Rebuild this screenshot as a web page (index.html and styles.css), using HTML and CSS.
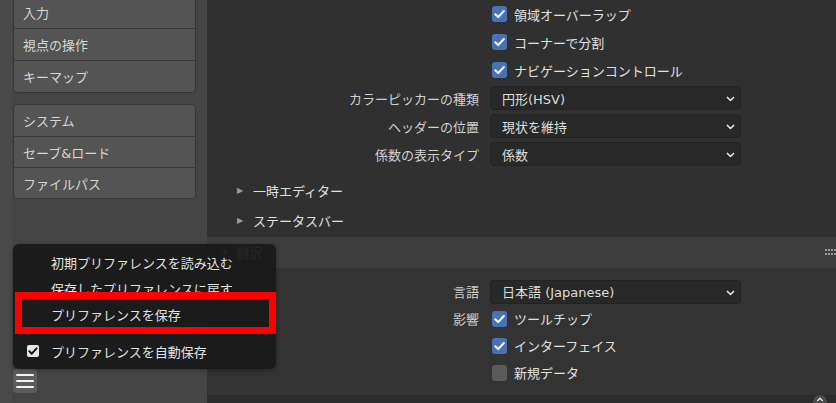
FILE: index.html
```html
<!DOCTYPE html>
<html lang="ja">
<head>
<meta charset="utf-8">
<title>Preferences</title>
<link rel="stylesheet" href="styles.css">
</head>
<body>
<div class="app">
  <aside class="sidebar">
    <div class="group g1">
      <div class="nav">入力</div>
      <div class="nav">視点の操作</div>
      <div class="nav">キーマップ</div>
    </div>
    <div class="group g2">
      <div class="nav">システム</div>
      <div class="nav">セーブ&amp;ロード</div>
      <div class="nav">ファイルパス</div>
    </div>
    <div class="hamburger">
      <span></span><span></span><span></span>
    </div>
  </aside>

  <main class="main">
    <section class="panel top">
      <div class="row">
        <div class="label"></div>
        <div class="ctrl"><span class="cb on"><svg viewBox="0 0 16 16"><path d="M3.5 8.3 L6.6 11.3 L12.6 4.8" /></svg></span>領域オーバーラップ</div>
      </div>
      <div class="row">
        <div class="label"></div>
        <div class="ctrl"><span class="cb on"><svg viewBox="0 0 16 16"><path d="M3.5 8.3 L6.6 11.3 L12.6 4.8" /></svg></span>コーナーで分割</div>
      </div>
      <div class="row">
        <div class="label"></div>
        <div class="ctrl"><span class="cb on"><svg viewBox="0 0 16 16"><path d="M3.5 8.3 L6.6 11.3 L12.6 4.8" /></svg></span>ナビゲーションコントロール</div>
      </div>
      <div class="row">
        <div class="label">カラーピッカーの種類</div>
        <div class="select">円形(HSV)<svg class="chev" viewBox="0 0 10 6"><path d="M1.5 1.2 L5 4.6 L8.5 1.2"/></svg></div>
      </div>
      <div class="row">
        <div class="label">ヘッダーの位置</div>
        <div class="select">現状を維持<svg class="chev" viewBox="0 0 10 6"><path d="M1.5 1.2 L5 4.6 L8.5 1.2"/></svg></div>
      </div>
      <div class="row">
        <div class="label">係数の表示タイプ</div>
        <div class="select">係数<svg class="chev" viewBox="0 0 10 6"><path d="M1.5 1.2 L5 4.6 L8.5 1.2"/></svg></div>
      </div>
      <div class="sub first"><span class="tri">▶</span>一時エディター</div>
      <div class="sub"><span class="tri">▶</span>ステータスバー</div>
    </section>

    <div class="phead">
      <span class="tri down">▼</span><span class="ptitle">翻訳</span>
      <svg class="handle" viewBox="0 0 11 7">
        <rect x="0" y="0" width="2" height="2"/><rect x="3" y="0" width="2" height="2"/><rect x="6" y="0" width="2" height="2"/><rect x="9" y="0" width="2" height="2"/>
        <rect x="0" y="4" width="2" height="2"/><rect x="3" y="4" width="2" height="2"/><rect x="6" y="4" width="2" height="2"/><rect x="9" y="4" width="2" height="2"/>
      </svg>
    </div>

    <section class="panel bottom">
      <div class="row">
        <div class="label">言語</div>
        <div class="select">日本語 (Japanese)<svg class="chev" viewBox="0 0 10 6"><path d="M1.5 1.2 L5 4.6 L8.5 1.2"/></svg></div>
      </div>
      <div class="row">
        <div class="label">影響</div>
        <div class="ctrl"><span class="cb on"><svg viewBox="0 0 16 16"><path d="M3.5 8.3 L6.6 11.3 L12.6 4.8" /></svg></span>ツールチップ</div>
      </div>
      <div class="row">
        <div class="label"></div>
        <div class="ctrl"><span class="cb on"><svg viewBox="0 0 16 16"><path d="M3.5 8.3 L6.6 11.3 L12.6 4.8" /></svg></span>インターフェイス</div>
      </div>
      <div class="row">
        <div class="label"></div>
        <div class="ctrl"><span class="cb"></span>新規データ</div>
      </div>
    </section>

    <div class="footer">
      <span class="totop"><svg viewBox="0 0 10 6"><path d="M1.5 4.8 L5 1.4 L8.5 4.8"/></svg></span>
    </div>
  </main>

  <div class="popup">
    <div class="mi">初期プリファレンスを読み込む</div>
    <div class="mi">保存したプリファレンスに戻す</div>
    <div class="mi">プリファレンスを保存</div>
    <div class="mi check"><span class="wcb"><svg viewBox="0 0 12 12"><path d="M2.3 6.2 L4.8 8.7 L9.6 3.4"/></svg></span>プリファレンスを自動保存</div>
    <div class="highlight"></div>
  </div>
</div>
</body>
</html>
```

FILE: styles.css
```css
* { box-sizing: border-box; }

html, body {
  margin: 0;
  padding: 0;
  width: 836px;
  height: 403px;
  overflow: hidden;
  background: #303030;
  font-family: "DejaVu Sans", "Noto Sans CJK JP", sans-serif;
  font-size: 13px;
  color: #d8d8d8;
}

.app {
  position: relative;
  display: flex;
  width: 836px;
  height: 403px;
}

/* ---------- sidebar ---------- */
.sidebar {
  width: 207px;
  flex: none;
  display: flex;
  flex-direction: column;
  background: #454545;
  padding: 0 11px 10px 1px;
  border-left: 12px solid #4a4a4a;
}

.group {
  background: #545454;
  border: 1px solid #383838;
  border-radius: 4px;
  overflow: hidden;
}

.g1 {
  margin-top: -4px;
  border-top: none;
}

.g2 {
  margin-top: 11px;
}

.nav {
  height: 32px;
  display: flex;
  align-items: center;
  padding-left: 9px;
  color: #d6d6d6;
}

.g2 .nav { height: 31px; }

.nav + .nav {
  border-top: 1px solid #3a3a3a;
}

.hamburger {
  margin-top: auto;
  width: 24px;
  height: 24px;
  border-radius: 4px;
  background: #5c5c5c;
  display: flex;
  flex-direction: column;
  justify-content: center;
  gap: 4px;
  padding: 0 3px;
}

.hamburger span {
  display: block;
  height: 2px;
  background: #f0f0f0;
  border-radius: 1px;
}

/* ---------- main ---------- */
.main {
  flex: 1;
  display: flex;
  flex-direction: column;
  background: #303030;
}

.panel.top {
  height: 237px;
  background: #303030;
  padding-top: 0;
}

.row {
  display: grid;
  grid-template-columns: 272px 251px;
  column-gap: 11px;
  height: 28px;
  align-items: center;
}

.label {
  text-align: right;
  color: #d0d0d0;
  white-space: nowrap;
}

.ctrl {
  display: flex;
  align-items: center;
  gap: 7px;
  padding-left: 2px;
  color: #e0e0e0;
  white-space: nowrap;
}

.cb {
  width: 15px;
  height: 16px;
  border-radius: 3px;
  background: #5a5a5a;
  flex: none;
  display: flex;
  align-items: center;
  justify-content: center;
}

.cb.on {
  background: #4772b3;
}

.cb svg {
  width: 15px;
  height: 16px;
  fill: none;
  stroke: #ffffff;
  stroke-width: 2.2;
  stroke-linecap: round;
  stroke-linejoin: round;
}

.select {
  position: relative;
  height: 24px;
  background: #282828;
  border: 1px solid #222;
  border-radius: 4px;
  display: flex;
  align-items: center;
  padding-left: 11px;
  color: #dcdcdc;
  white-space: nowrap;
}

.chev {
  position: absolute;
  right: 5px;
  top: 9px;
  width: 9px;
  height: 6px;
  fill: none;
  stroke: #e6e6e6;
  stroke-width: 1.6;
  stroke-linecap: round;
  stroke-linejoin: round;
}

.sub {
  height: 30px;
  display: flex;
  align-items: center;
  padding-left: 30px;
  color: #e0e0e0;
}

.sub.first { margin-top: 7px; }

.tri {
  font-size: 8px;
  color: #9a9a9a;
  width: 16px;
  flex: none;
}

.phead {
  height: 31px;
  background: #3d3d3d;
  display: flex;
  align-items: center;
  padding-left: 15px;
  position: relative;
  color: #d8d8d8;
}

.tri.down {
  width: 14px;
}

.handle {
  position: absolute;
  right: 0;
  top: 12px;
  width: 11px;
  height: 7px;
  fill: #9a9a9a;
}

.panel.bottom {
  background: #333333;
  padding-top: 10px;
  height: 127px;
}

.panel.bottom .row {
  height: 27px;
}

.footer {
  flex: 1;
  background: #2b2b2b;
  position: relative;
}

.totop {
  position: absolute;
  left: 606px;
  top: 0px;
  width: 14px;
  height: 8px;
  border-radius: 7px 7px 0 0;
  background: #4a4a4a;
  display: flex;
  justify-content: center;
  align-items: center;
}

.totop svg {
  width: 8px;
  height: 5px;
  fill: none;
  stroke: #e8e8e8;
  stroke-width: 1.6;
}

/* ---------- popup menu ---------- */
.popup {
  position: absolute;
  left: 13px;
  top: 244px;
  width: 263px;
  height: 125px;
  background: rgba(24, 24, 24, 0.92);
  border-radius: 6px;
  padding-top: 5px;
  box-shadow: 0 1px 4px rgba(0, 0, 0, 0.35);
}

.mi {
  height: 26px;
  display: flex;
  align-items: center;
  padding-left: 38px;
  color: #e2e2e2;
  white-space: nowrap;
}

.mi.check {
  margin-top: 11px;
  padding-left: 14px;
  gap: 12px;
}

.wcb {
  width: 12px;
  height: 12px;
  border-radius: 2px;
  background: #e8e8e8;
  flex: none;
  display: flex;
}

.wcb svg {
  width: 12px;
  height: 12px;
  fill: none;
  stroke: #111;
  stroke-width: 2;
  stroke-linecap: round;
  stroke-linejoin: round;
}

.highlight {
  position: absolute;
  left: 2px;
  top: 48px;
  width: 261px;
  height: 42px;
  border: 7px solid #ff0000;
}
```
